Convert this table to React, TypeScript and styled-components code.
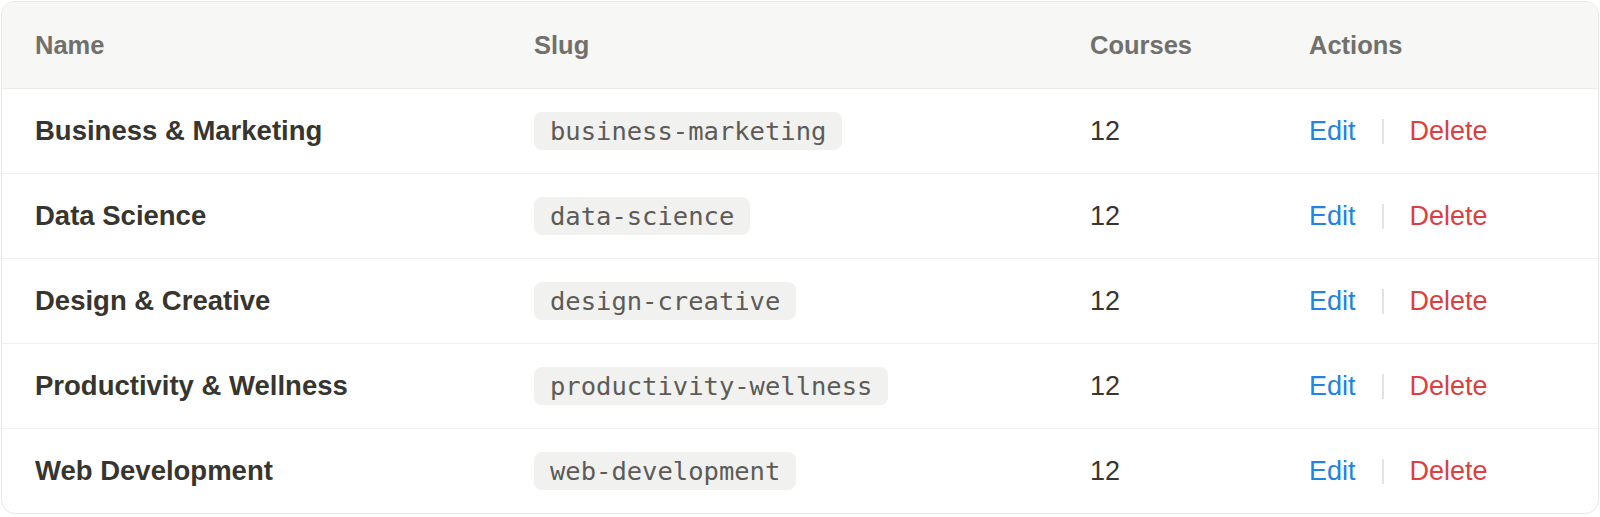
import React from "react";
import styled, { createGlobalStyle } from "styled-components";

const Global = createGlobalStyle`
  html, body { margin: 0; padding: 0; background: #ffffff; }
  body { font-family: "Liberation Sans", Arial, sans-serif; }
`;

const Page = styled.div`
  padding: 1px 1px 0 1px;
  width: 1598px;
`;

const Card = styled.div`
  border: 1px solid #e8e8e6;
  border-radius: 14px;
  overflow: hidden;
  background: #ffffff;
`;

const cols = "499px 556px 219px 1fr";

const HeaderRow = styled.div`
  display: grid;
  grid-template-columns: ${cols};
  height: 86px;
  align-items: center;
  background: #f7f7f5;
  border-bottom: 1px solid #ebebea;
`;

const HeadCell = styled.div`
  padding-left: 33px;
  font-size: 25.5px;
  font-weight: 700;
  color: #71706c;
`;

const Row = styled.div<{ $last?: boolean }>`
  display: grid;
  grid-template-columns: ${cols};
  height: 84px;
  align-items: center;
  border-bottom: ${(p) => (p.$last ? "none" : "1px solid #efefee")};
`;

const Cell = styled.div`
  padding-left: 33px;
  display: flex;
  align-items: center;
`;

const NameText = styled.span`
  font-size: 27.5px;
  font-weight: 700;
  color: #37352f;
`;

const Slug = styled.code`
  font-family: "DejaVu Sans Mono", "Liberation Mono", monospace;
  font-size: 25.5px;
  line-height: 30px;
  padding: 4px 16px;
  border-radius: 8px;
  background: #f1f1ef;
  color: #5c5b58;
`;

const Count = styled.span`
  font-size: 27px;
  color: #37352f;
`;

const Actions = styled.div`
  display: flex;
  align-items: center;
  gap: 26px;
`;

const ActionLink = styled.a<{ $tone: "edit" | "delete" }>`
  font-size: 27px;
  color: ${(p) => (p.$tone === "edit" ? "#2383e2" : "#dc3f3f")};
  text-decoration: none;
  cursor: pointer;
`;

const Sep = styled.span`
  width: 2px;
  height: 25px;
  background: #e3e3e1;
`;

const data = [
  { name: "Business & Marketing", slug: "business-marketing", courses: 12 },
  { name: "Data Science", slug: "data-science", courses: 12 },
  { name: "Design & Creative", slug: "design-creative", courses: 12 },
  { name: "Productivity & Wellness", slug: "productivity-wellness", courses: 12 },
  { name: "Web Development", slug: "web-development", courses: 12 },
];

export default function App() {
  return (
    <Page>
      <Global />
      <Card>
        <HeaderRow>
          <HeadCell>Name</HeadCell>
          <HeadCell>Slug</HeadCell>
          <HeadCell>Courses</HeadCell>
          <HeadCell>Actions</HeadCell>
        </HeaderRow>
        {data.map((d, i) => (
          <Row key={d.slug} $last={i === data.length - 1}>
            <Cell>
              <NameText>{d.name}</NameText>
            </Cell>
            <Cell>
              <Slug>{d.slug}</Slug>
            </Cell>
            <Cell>
              <Count>{d.courses}</Count>
            </Cell>
            <Cell>
              <Actions>
                <ActionLink $tone="edit">Edit</ActionLink>
                <Sep />
                <ActionLink $tone="delete">Delete</ActionLink>
              </Actions>
            </Cell>
          </Row>
        ))}
      </Card>
    </Page>
  );
}
